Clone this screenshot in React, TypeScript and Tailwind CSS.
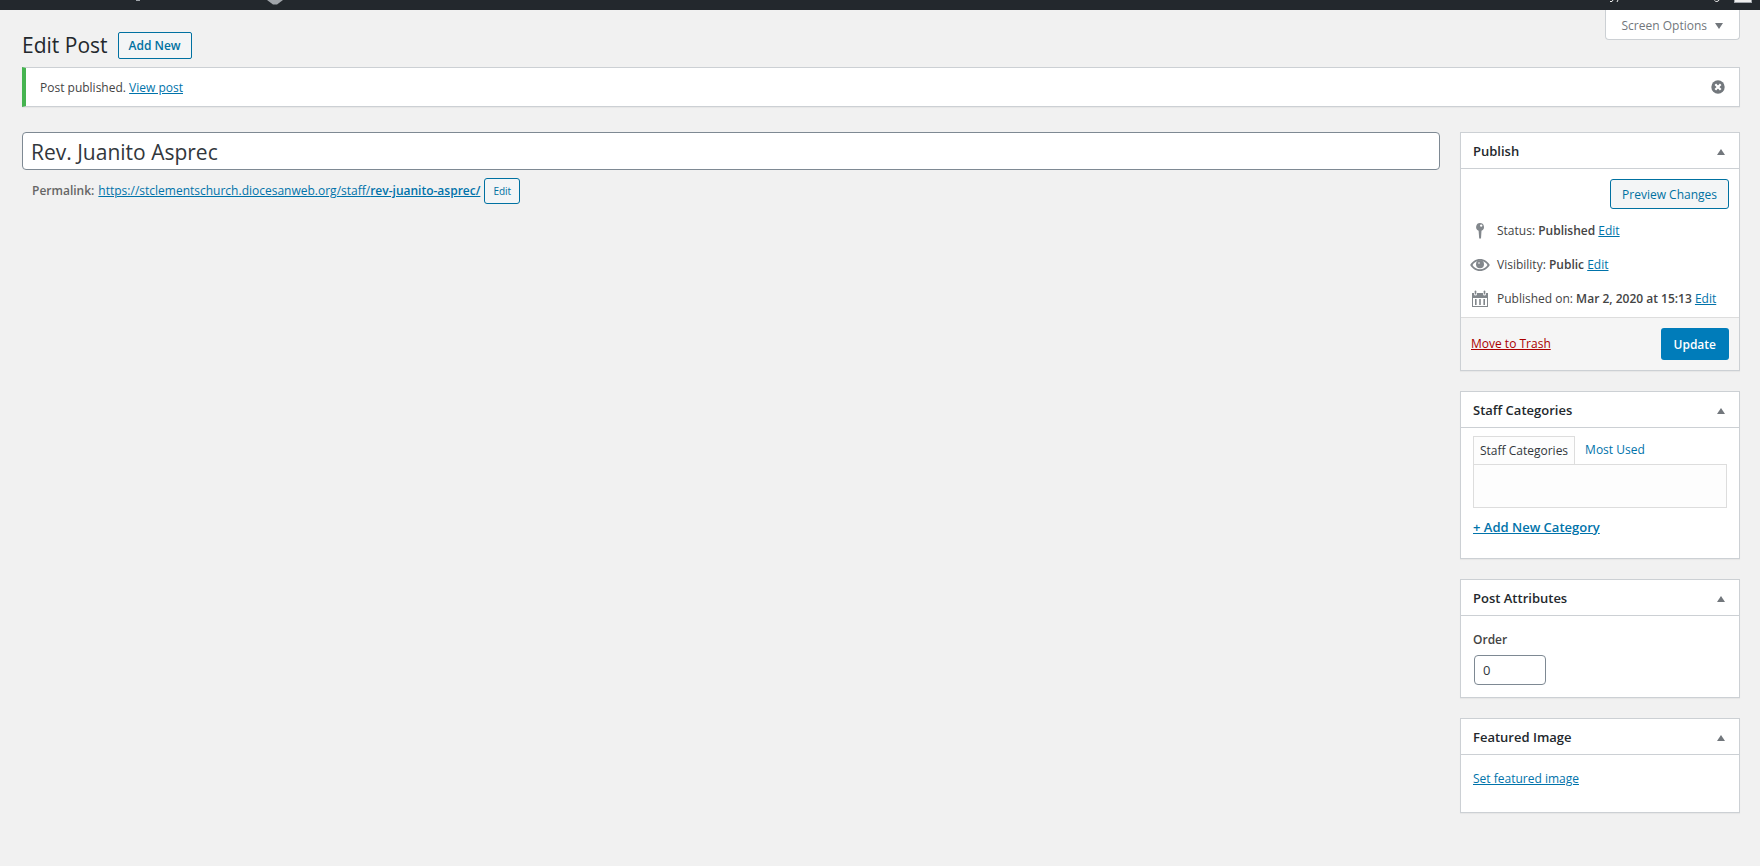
import React from "react";

interface PanelProps {
  title: string;
  children: React.ReactNode;
}

function Panel({ title, children }: PanelProps) {
  return (
    <section className="bg-white border border-[#ccd0d4] shadow-[0_1px_1px_rgba(0,0,0,0.04)]">
      <div className="flex items-center justify-between h-9 px-3 border-b border-[#ccd0d4]">
        <h2 className="text-[13px] leading-5 font-semibold text-[#23282d]">{title}</h2>
        <button type="button" aria-label={`Toggle panel: ${title}`} className="p-px pt-1">
          <svg viewBox="0 0 10 8" className="w-2.5 h-2" fill="#72777c" aria-hidden="true">
            <path d="M1 7 5 1l4 6z" />
          </svg>
        </button>
      </div>
      {children}
    </section>
  );
}

interface PublishRowProps {
  icon: React.ReactNode;
  label: string;
  value: string;
}

function PublishRow({ icon, label, value }: PublishRowProps) {
  return (
    <div className="flex items-center gap-[7px] h-[34px] pl-[9px]">
      {icon}
      <p className="whitespace-nowrap">
        {label} <span className="font-semibold">{value}</span>{" "}
        <a href="#" className="text-[#0073aa] underline">Edit</a>
      </p>
    </div>
  );
}

const iconClass = "w-5 h-5 shrink-0";

function PinIcon() {
  return (
    <svg viewBox="0 0 20 20" className={iconClass} fill="#82878c" aria-hidden="true">
      <path
        fillRule="evenodd"
        d="M10 2a4 4 0 0 1 1.500 7.700L11 17.600h-1.800L8.600 9.700A4 4 0 0 1 10 2zm1.200 1.400a1.200 1.200 0 1 0 0 2.400 1.200 1.200 0 0 0 0-2.400z"
      />
    </svg>
  );
}

function EyeIcon() {
  return (
    <svg viewBox="0 0 20 20" className={iconClass} aria-hidden="true">
      <path
        fill="#82878c"
        fillRule="evenodd"
        d="M10 4c4.400 0 8 2.700 9.800 6-1.800 3.300-5.400 6-9.800 6s-8-2.700-9.800-6C2 6.700 5.600 4 10 4zm0 1.700c-3.400 0-6.100 1.900-7.500 4.300 1.400 2.400 4.100 4.300 7.500 4.300s6.100-1.900 7.500-4.300c-1.400-2.400-4.100-4.300-7.500-4.300z"
      />
      <circle cx="10" cy="9.300" r="4" fill="#82878c" />
      <circle cx="9" cy="8" r="1" fill="#fff" opacity=".6" />
    </svg>
  );
}

function CalendarIcon() {
  return (
    <svg viewBox="0 0 20 20" className={iconClass} fill="#82878c" aria-hidden="true">
      <path
        fillRule="evenodd"
        d="M2 4h2v1a1.500 1.500 0 0 0 3 0V4h6v1a1.500 1.500 0 0 0 3 0V4h2v14H2zm1 5v8h14V9z"
      />
      <path d="M5 10h1.600v6H5zM9.200 10h1.600v6H9.200zM13.400 10H15v6h-1.600z" />
      <rect x="4.700" y="1.500" width="1.600" height="4" rx=".8" />
      <rect x="13.700" y="1.500" width="1.600" height="4" rx=".8" />
    </svg>
  );
}

// The bar is scrolled up, so only the lower edge of its content shows.
function AdminBar() {
  return (
    <header className="flex items-end justify-between h-2.5 overflow-hidden bg-[#23282d]">
      <svg viewBox="0 0 300 10" className="w-[300px] h-2.5" aria-hidden="true">
        <rect x="136" y="0" width="4" height="1" fill="#a0a5aa" />
        <path d="M267 0h16l-6 4.500h-4z" fill="#a0a5aa" />
      </svg>
      <svg viewBox="0 0 160 10" className="w-40 h-2.5" aria-hidden="true">
        <path d="M13 0 12 1.500h-2M18 0l-1 2" fill="none" stroke="#eee" />
        <path d="M114.500.5c1 1.500 4 1.300 4.500-.5" fill="none" stroke="#eee" />
        <path d="M134 0h18v3h-18z" fill="#a0a5aa" />
        <path d="M135 0h16v2h-16z" fill="#eee" />
      </svg>
    </header>
  );
}

export default function App() {
  return (
    <div className="min-h-screen bg-[#f1f1f1] text-[#444] text-[12px] leading-5 font-['Open_Sans','Noto_Sans',sans-serif]">
      <AdminBar />

      <main className="pl-[22px] pr-5">
        <div className="flex items-start justify-between">
          <div className="flex items-center gap-2.5 pt-[21px]">
            <h1 className="text-[21px] leading-7 text-[#23282d]">Edit Post</h1>
            <a
              href="#"
              className="h-[27px] px-2.5 rounded-xs border border-[#0071a1] bg-[#f3f5f6] text-[#0071a1] font-semibold leading-[25px]"
            >
              Add New
            </a>
          </div>
          <button
            type="button"
            className="flex items-center gap-2 h-[30px] px-4 pt-0.5 bg-white border border-t-0 border-[#ccd0d4] rounded-b text-[#72777c]"
          >
            Screen Options
            <svg viewBox="0 0 8 6" className="w-2 h-1.5" fill="#72777c" aria-hidden="true">
              <path d="M0 0h8L4 6z" />
            </svg>
          </button>
        </div>

        <div className="flex items-center justify-between h-10 mt-2 px-[14px] bg-white border border-l-4 border-[#ccd0d4] border-l-[#46b450] shadow-[0_1px_1px_rgba(0,0,0,0.04)]">
          <p className="pt-0.5">
            Post published. <a href="#" className="text-[#0073aa] underline">View post</a>
          </p>
          <button type="button" aria-label="Dismiss this notice">
            <svg viewBox="0 0 14 14" className="w-3.5 h-3.5" aria-hidden="true">
              <circle cx="7" cy="7" r="6.700" fill="#72777c" />
              <path d="m4.300 4.300 5.400 5.400m0-5.400-5.400 5.400" stroke="#fff" strokeWidth="2.200" />
            </svg>
          </button>
        </div>

        <div className="flex items-start gap-5 mt-[25px]">
          <div className="flex-1 min-w-0">
            <input
              type="text"
              aria-label="Title"
              defaultValue="Rev. Juanito Asprec"
              className="block w-full h-[38px] px-2 pt-0.5 bg-white border border-[#7e8993] rounded text-[21px] text-[#32373c]"
            />
            <div className="flex items-center gap-1 pt-2 pl-[10px]">
              <span className="font-semibold text-[#666]">Permalink:</span>
              <a href="#" className="text-[#0073aa] underline">
                https://stclementschurch.diocesanweb.org/staff/
                <span className="font-semibold">rev-juanito-asprec/</span>
              </a>
              <button
                type="button"
                className="h-[26px] px-2 bg-[#f3f5f6] border border-[#0071a1] rounded-[3px] text-[10px] text-[#0071a1]"
              >
                Edit
              </button>
            </div>
          </div>

          <aside className="flex flex-col gap-5 w-[280px] shrink-0">
            <Panel title="Publish">
              <div className="flex justify-end pt-2.5 pr-2.5 pb-[5px]">
                <button
                  type="button"
                  className="h-[30px] px-[11px] pt-0.5 bg-[#f3f5f6] border border-[#0071a1] rounded-[3px] text-[#0071a1]"
                >
                  Preview Changes
                </button>
              </div>
              <PublishRow icon={<PinIcon />} label="Status:" value="Published" />
              <PublishRow icon={<EyeIcon />} label="Visibility:" value="Public" />
              <PublishRow icon={<CalendarIcon />} label="Published on:" value="Mar 2, 2020 at 15:13" />
              <div className="flex items-center justify-between p-2.5 mt-px bg-[#f5f5f5] border-t border-[#ddd]">
                <a href="#" className="text-[#a00] underline">Move to Trash</a>
                <button
                  type="button"
                  className="h-8 px-[13px] pt-0.5 rounded-[3px] bg-[#007cba] text-white font-semibold"
                >
                  Update
                </button>
              </div>
            </Panel>

            <Panel title="Staff Categories">
              <div className="px-3 pt-2 pb-5">
                <div className="flex">
                  <button
                    type="button"
                    className="relative z-10 -mb-px h-7 px-1.5 bg-[#fdfdfd] border border-b-0 border-[#ddd] text-[#32373c]"
                  >
                    Staff Categories
                  </button>
                  <button type="button" className="h-7 px-2.5 text-[#0073aa]">Most Used</button>
                </div>
                <div className="h-11 bg-[#fdfdfd] border border-[#ddd]" />
                <a href="#" className="inline-block mt-[9px] text-[13px] font-semibold text-[#0073aa] underline">
                  + Add New Category
                </a>
              </div>
            </Panel>

            <Panel title="Post Attributes">
              <div className="px-3 pt-[14px] pb-3">
                <label htmlFor="menu-order" className="block font-semibold">Order</label>
                <input
                  id="menu-order"
                  type="text"
                  defaultValue="0"
                  className="block w-[72px] h-[30px] mt-[5px] ml-px px-2 bg-white border border-[#7e8993] rounded text-[13px] text-[#32373c]"
                />
              </div>
            </Panel>

            <Panel title="Featured Image">
              <div className="px-3 pt-[14px] pb-[23px]">
                <a href="#" className="block w-fit text-[#0073aa] underline">Set featured image</a>
              </div>
            </Panel>
          </aside>
        </div>
      </main>
    </div>
  );
}
